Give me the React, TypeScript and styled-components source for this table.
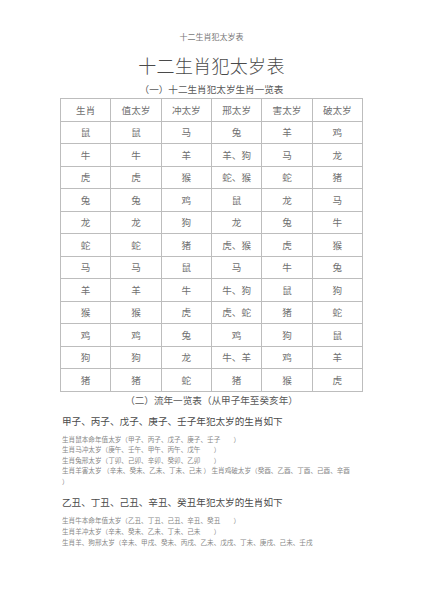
import React from "react";
import styled, { createGlobalStyle } from "styled-components";

const Global = createGlobalStyle`
  html, body { margin: 0; padding: 0; background: #fff; }
  body { font-family: "Noto Sans CJK SC", "Noto Sans", sans-serif; color: #555; }
`;

const Page = styled.div`
  width: 423px;
  height: 600px;
  overflow: hidden;
  background: #fff;
  display: flex;
  flex-direction: column;
  align-items: center;
  padding-top: 31px;
  box-sizing: border-box;
`;

const RunningHead = styled.div`
  font-size: 8px;
  line-height: 12px;
  color: #777;
`;

const Title = styled.h1`
  margin: 9px 0 0;
  font-size: 18px;
  line-height: 26px;
  font-weight: 300;
  color: #4a4a4a;
  letter-spacing: 0.3px;
`;

const Caption = styled.div<{ $top: number }>`
  margin-top: ${(p) => p.$top}px;
  font-size: 9.6px;
  line-height: 13px;
  color: #595959;
`;

const Table = styled.table`
  margin-top: 2px;
  border-collapse: collapse;
  width: 303px;
  table-layout: fixed;
`;

const Cell = styled.td`
  border: 1px solid #bdbdbd;
  height: 21.5px;
  padding: 0;
  text-align: center;
  font-size: 9.6px;
  color: #707070;
`;

const Section = styled.div`
  align-self: stretch;
  padding-left: 62px;
  display: flex;
  flex-direction: column;
`;

const SectionHead = styled.div<{ $top: number }>`
  margin-top: ${(p) => p.$top}px;
  font-size: 9.6px;
  line-height: 13px;
  color: #4a4a4a;
`;

const Lines = styled.div`
  margin-top: 6px;
  font-size: 6.6px;
  line-height: 10.6px;
  color: #888;
  white-space: pre;
`;

const rows: string[][] = [
  ["生肖", "值太岁", "冲太岁", "邢太岁", "害太岁", "破太岁"],
  ["鼠", "鼠", "马", "兔", "羊", "鸡"],
  ["牛", "牛", "羊", "羊、狗", "马", "龙"],
  ["虎", "虎", "猴", "蛇、猴", "蛇", "猪"],
  ["兔", "兔", "鸡", "鼠", "龙", "马"],
  ["龙", "龙", "狗", "龙", "兔", "牛"],
  ["蛇", "蛇", "猪", "虎、猴", "虎", "猴"],
  ["马", "马", "鼠", "马", "牛", "兔"],
  ["羊", "羊", "牛", "牛、狗", "鼠", "狗"],
  ["猴", "猴", "虎", "虎、蛇", "猪", "蛇"],
  ["鸡", "鸡", "兔", "鸡", "狗", "鼠"],
  ["狗", "狗", "龙", "牛、羊", "鸡", "羊"],
  ["猪", "猪", "蛇", "猪", "猴", "虎"],
];

const sec1 = [
  "生肖鼠本命年值太岁（甲子、丙子、戊子、庚子、壬子　　）",
  "生肖马冲太岁（庚午、壬午、甲午、丙午、戊午　　）",
  "生肖兔邢太岁（丁卯、己卯、辛卯、癸卯、乙卯　　）",
  "生肖羊害太岁 （辛未、癸未、乙未、丁未、己未 ） 生肖鸡破太岁（癸酉、乙酉、丁酉、己酉、辛酉",
  "）",
];

const sec2 = [
  "生肖牛本命年值太岁（乙丑、丁丑、己丑、辛丑、癸丑　　）",
  "生肖羊冲太岁（辛未、癸未、乙未、丁未、己未　　）",
  "生肖羊、狗邢太岁（辛未、甲戌、癸未、丙戌、乙未、戊戌、丁未、庚戌、己未、壬戌",
];

export default function App() {
  return (
    <>
      <Global />
      <Page>
        <RunningHead>十二生肖犯太岁表</RunningHead>
        <Title>十二生肖犯太岁表</Title>
        <Caption $top={5}>（一）十二生肖犯太岁生肖一览表</Caption>
        <Table>
          <tbody>
            {rows.map((r, i) => (
              <tr key={i}>
                {r.map((c, j) => (
                  <Cell key={j}>{c}</Cell>
                ))}
              </tr>
            ))}
          </tbody>
        </Table>
        <Caption $top={2}>（二）流年一览表（从甲子年至癸亥年）</Caption>
        <Section>
          <SectionHead $top={8}>甲子、丙子、戊子、庚子、壬子年犯太岁的生肖如下</SectionHead>
          <Lines>
            {sec1.map((l, i) => (
              <div key={i}>{l}</div>
            ))}
          </Lines>
          <SectionHead $top={10}>乙丑、丁丑、己丑、辛丑、癸丑年犯太岁的生肖如下</SectionHead>
          <Lines>
            {sec2.map((l, i) => (
              <div key={i}>{l}</div>
            ))}
          </Lines>
        </Section>
      </Page>
    </>
  );
}
